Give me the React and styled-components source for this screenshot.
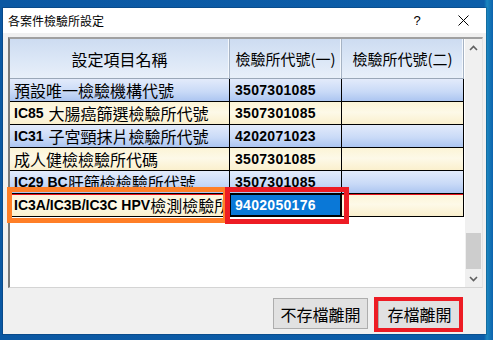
import React from "react";
import styled, { createGlobalStyle } from "styled-components";

const Global = createGlobalStyle`
  html, body {
    margin: 0;
    padding: 0;
    width: 493px;
    height: 340px;
    overflow: hidden;
    background: linear-gradient(90deg, #0b58a3 0, #0c5ea9 484px, #1a86c0 487px, #0d63ad 493px);
    font-family: "Noto Sans CJK TC", "Liberation Sans", sans-serif;
  }
`;

const Desktop = styled.div`
  padding: 8px 0 0 3px;
`;

const Window = styled.div`
  width: 483px;
  height: 326px;
  background: #f0f0f0;
  display: flex;
  flex-direction: column;
  box-shadow: 0 0 0 1px rgba(0, 0, 0, 0.15);
`;

const TitleBar = styled.div`
  height: 25px;
  background: #ffffff;
  display: flex;
  align-items: center;
  padding-left: 5px;
`;

const Title = styled.div`
  flex: 1;
  font-size: 12px;
  line-height: 14px;
  color: #000;
  font-family: "Noto Sans CJK TC", sans-serif;
`;

const TitleButton = styled.div`
  width: 46px;
  height: 25px;
  display: flex;
  align-items: center;
  justify-content: center;
  font-family: "Liberation Sans", sans-serif;
  font-size: 13px;
  color: #000;
`;

const Client = styled.div`
  flex: 1;
  display: flex;
  flex-direction: column;
  padding: 4px 3px 5px 5px;
`;

const GridFrame = styled.div`
  position: relative;
  height: 248px;
  border-top: 2px solid #a0a0a0;
  border-left: 2px solid #7a7a7a;
  border-right: 1px solid #e3e3e3;
  border-bottom: 1px solid #d4d4d4;
  background: #ffffff;
  display: flex;
`;

const Table = styled.div`
  width: 454px;
  display: flex;
  flex-direction: column;
`;

const HeaderRow = styled.div`
  display: flex;
  height: 40px;
  background: linear-gradient(#cddcf1, #dde8f7 60%, #e8eff9);
  border-bottom: 1px solid #9aa7b8;
  box-sizing: border-box;
`;

const HeaderCell = styled.div`
  width: ${(p) => p.w}px;
  box-sizing: border-box;
  display: flex;
  align-items: center;
  justify-content: center;
  font-size: ${(p) => (p.small ? 15 : 16)}px;
  line-height: 18px;
  color: #000;
  white-space: nowrap;
  overflow: hidden;
  border-right: 1px solid #a6b3c4;
  box-shadow: inset -1px 0 0 #f4f8fd;
`;

const Row = styled.div`
  display: flex;
  height: 23px;
  position: relative;
  background: ${(p) =>
    p.tone === "blue"
      ? "linear-gradient(#e3ebfb, #c9daf7 55%, #a9c3f0)"
      : "linear-gradient(#fcf4d6, #fdf9e8 45%, #faefcb)"};
  box-shadow: ${(p) => (p.selected ? "inset 0 0 0 1px #e8141c" : "none")};
`;

const Cell = styled.div`
  width: ${(p) => p.w}px;
  box-sizing: border-box;
  display: flex;
  align-items: center;
  padding-left: ${(p) => (p.num ? 5 : 4)}px;
  border-right: 1px solid #000;
  border-bottom: 1px solid #000;
  white-space: nowrap;
  overflow: hidden;
  font-size: 16px;
  line-height: 18px;
  color: #000;
`;

const ActiveCell = styled(Cell)`
  background: #0a78d7;
  color: #ffffff;
  box-shadow: inset 0 0 0 1px #000;
`;

const Code = styled.span`
  font-family: "Liberation Sans", sans-serif;
  font-weight: bold;
  font-size: 14px;
  letter-spacing: 0.3px;
`;

const Prefix = styled.span`
  font-family: "Liberation Sans", sans-serif;
  font-weight: bold;
  font-size: 14px;
  margin-right: ${(p) => (p.gap ? 5 : 0)}px;
`;

const ScrollBar = styled.div`
  width: 17px;
  margin-left: 1px;
  background: #f0f0f0;
  display: flex;
  flex-direction: column;
`;

const ScrollArrow = styled.div`
  height: 17px;
  display: flex;
  align-items: center;
  justify-content: center;
`;

const ScrollTrack = styled.div`
  flex: 1;
  display: flex;
  flex-direction: column;
  justify-content: flex-end;
  align-items: center;
  padding-bottom: 1px;
`;

const Thumb = styled.div`
  width: 15px;
  height: 36px;
  background: #cdcdcd;
`;

const Mark = styled.div`
  position: absolute;
  box-sizing: border-box;
  border: ${(p) => p.t}px solid ${(p) => p.c};
  left: ${(p) => p.x}px;
  top: ${(p) => p.y}px;
  width: ${(p) => p.w}px;
  height: ${(p) => p.h}px;
  pointer-events: none;
`;

const ButtonRow = styled.div`
  display: flex;
  justify-content: flex-end;
  gap: 10px;
  padding: 10px 22px 0 0;
`;

const ButtonWrap = styled.div`
  position: relative;
`;

const Button = styled.button`
  height: 31px;
  width: ${(p) => p.w}px;
  background: #e1e1e1;
  border: 1px solid #adadad;
  font-family: "Noto Sans CJK TC", sans-serif;
  font-size: 16px;
  line-height: 18px;
  color: #000;
  padding: 0;
  margin: 0;
`;

const Chevron = ({ up }) => (
  <svg width="9" height="6" viewBox="0 0 9 6">
    <polyline
      points={up ? "1,5 4.5,1.5 8,5" : "1,1 4.5,4.5 8,1"}
      fill="none"
      stroke="#606060"
      strokeWidth="1.6"
    />
  </svg>
);

const rows = [
  { tone: "blue", prefix: "", name: "預設唯一檢驗機構代號", code: "3507301085" },
  { tone: "cream", prefix: "IC85", gap: true, name: "大腸癌篩選檢驗所代號", code: "3507301085" },
  { tone: "blue", prefix: "IC31", gap: true, name: "子宮頸抹片檢驗所代號", code: "4202071023" },
  { tone: "cream", prefix: "", name: "成人健檢檢驗所代碼", code: "3507301085" },
  { tone: "blue", prefix: "IC29 BC", name: "肝篩檢檢驗所代號", code: "3507301085" },
  { tone: "cream", prefix: "IC3A/IC3B/IC3C HPV", name: "檢測檢驗所代號", code: "9402050176", selected: true },
];

export default function App() {
  return (
    <>
      <Global />
      <Desktop>
        <Window>
          <TitleBar>
            <Title>各案件檢驗所設定</Title>
            <TitleButton>?</TitleButton>
            <TitleButton>
              <svg width="11" height="11" viewBox="0 0 11 11">
                <path d="M0.5 0.5 L10.5 10.5 M10.5 0.5 L0.5 10.5" stroke="#000" strokeWidth="1" />
              </svg>
            </TitleButton>
          </TitleBar>
          <Client>
            <GridFrame>
              <Table>
                <HeaderRow>
                  <HeaderCell w={220}>設定項目名稱</HeaderCell>
                  <HeaderCell w={112} small>檢驗所代號(一)</HeaderCell>
                  <HeaderCell w={122} small>檢驗所代號(二)</HeaderCell>
                </HeaderRow>
                {rows.map((r) => {
                  const Second = r.selected ? ActiveCell : Cell;
                  return (
                    <Row key={r.code + r.name} tone={r.tone} selected={r.selected}>
                      <Cell w={220}>
                        {r.prefix && <Prefix gap={r.gap}>{r.prefix}</Prefix>}
                        {r.name}
                      </Cell>
                      <Second w={112} num>
                        <Code>{r.code}</Code>
                      </Second>
                      <Cell w={122} />
                    </Row>
                  );
                })}
              </Table>
              <ScrollBar>
                <ScrollArrow>
                  <Chevron up />
                </ScrollArrow>
                <ScrollTrack>
                  <Thumb />
                </ScrollTrack>
                <ScrollArrow>
                  <Chevron />
                </ScrollArrow>
              </ScrollBar>
              <Mark c="#ff7f27" t={5} x={-3} y={148} w={221} h={36} />
              <Mark c="#ed1c24" t={5} x={215} y={148} w={124} h={37} />
            </GridFrame>
            <ButtonRow>
              <Button w={95}>不存檔離開</Button>
              <ButtonWrap>
                <Button w={83}>存檔離開</Button>
                <Mark c="#ed1c24" t={4} x={-4} y={-1} w={89} h={35} />
              </ButtonWrap>
            </ButtonRow>
          </Client>
        </Window>
      </Desktop>
    </>
  );
}
